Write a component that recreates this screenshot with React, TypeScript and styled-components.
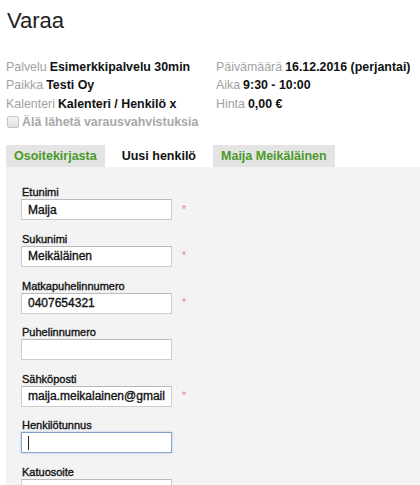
import styled, { createGlobalStyle } from "styled-components";

const GlobalStyle = createGlobalStyle`
    html, body {
        margin: 0;
        padding: 0;
        background: #fff;
    }
    body {
        font-family: "Liberation Sans", Arial, sans-serif;
        color: #111;
        overflow: hidden;
    }
`;

const Page = styled.main`
    padding: 8px 0 0 6px;
    width: 414px;
    height: 477px;
    overflow: hidden;
`;

const Title = styled.h1`
    margin: 0 0 0 1px;
    font-size: 22px;
    line-height: 26px;
    font-weight: 400;
    color: #222;
`;

const Info = styled.section`
    display: grid;
    grid-template-columns: 210px 1fr;
    grid-auto-rows: 18.3px;
    margin-top: 24px;
    font-size: 12.4px;
    line-height: 18.3px;
    white-space: nowrap;
`;

const InfoItem = styled.div`
    color: #111;
    font-weight: 700;
`;

const Key = styled.span`
    color: #a2a2a2;
    font-weight: 400;
    margin-right: 3px;
`;

const CheckRow = styled.label`
    grid-column: 1 / 3;
    display: flex;
    align-items: center;
    gap: 3px;
    color: #a8a8a8;
    font-size: 12.4px;
    font-weight: 700;
`;

const CheckBox = styled.span`
    box-sizing: border-box;
    width: 12px;
    height: 12px;
    margin-left: 1px;
    border: 1px solid #c4c4c4;
    border-radius: 2px;
    background: linear-gradient(#f4f4f4, #e2e2e2);
`;

const Tabs = styled.nav`
    display: flex;
    gap: 9px;
    margin-top: 14px;
`;

const Tab = styled.div<{ $active?: boolean }>`
    height: 22px;
    padding: 0 8px;
    line-height: 23px;
    font-size: 12.5px;
    font-weight: 700;
    color: ${(p) => (p.$active ? "#111" : "#4b9a2b")};
    background: ${(p) => (p.$active ? "#fff" : "#e4e4e4")};
`;

const Panel = styled.section`
    background: #f3f3f3;
    padding: 19px 0 0 15px;
    height: 320px;
`;

const Field = styled.div`
    margin-bottom: 12.67px;
`;

const Label = styled.label`
    display: block;
    margin-left: 1px;
    font-size: 11px;
    line-height: 13px;
    color: #111;
    -webkit-text-stroke: 0.35px #111;
`;

const InputRow = styled.div`
    position: relative;
    display: flex;
    align-items: center;
`;

const Input = styled.input<{ $focused?: boolean }>`
    box-sizing: border-box;
    width: 151px;
    height: 21px;
    padding: 0 6px;
    margin: 0;
    font-family: "Liberation Sans", Arial, sans-serif;
    font-size: 12px;
    color: #111;
    -webkit-text-stroke: 0.35px #111;
    background: #fff;
    border: 1px solid ${(p) => (p.$focused ? "#87a9d4" : "#cdcdcd")};
    border-top-color: ${(p) => (p.$focused ? "#7c9fcc" : "#b9b9b9")};
    box-shadow: ${(p) => (p.$focused ? "0 0 2px rgba(90, 140, 210, 0.5)" : "none")};
    outline: none;
`;

const Caret = styled.span`
    position: absolute;
    left: 7px;
    top: 4px;
    width: 1px;
    height: 14px;
    background: #222;
`;

const Star = styled.span`
    margin-left: 10px;
    color: #d9828a;
    font-size: 10px;
    line-height: 10px;
`;

type FieldData = { label: string; value: string; required?: boolean; focused?: boolean };

const fields: FieldData[] = [
    { label: "Etunimi", value: "Maija", required: true },
    { label: "Sukunimi", value: "Meikäläinen", required: true },
    { label: "Matkapuhelinnumero", value: "0407654321", required: true },
    { label: "Puhelinnumero", value: "" },
    { label: "Sähköposti", value: "maija.meikalainen@gmail.com", required: true },
    { label: "Henkilötunnus", value: "", focused: true },
    { label: "Katuosoite", value: "" },
];

const App = () => {
    return (
        <Page>
            <GlobalStyle />
            <Title>Varaa</Title>

            <Info>
                <InfoItem>
                    <Key>Palvelu</Key>Esimerkkipalvelu 30min
                </InfoItem>
                <InfoItem>
                    <Key>Päivämäärä</Key>16.12.2016 (perjantai)
                </InfoItem>
                <InfoItem>
                    <Key>Paikka</Key>Testi Oy
                </InfoItem>
                <InfoItem>
                    <Key>Aika</Key>9:30 - 10:00
                </InfoItem>
                <InfoItem>
                    <Key>Kalenteri</Key>Kalenteri / Henkilö x
                </InfoItem>
                <InfoItem>
                    <Key>Hinta</Key>0,00 €
                </InfoItem>
                <CheckRow>
                    <CheckBox />
                    Älä lähetä varausvahvistuksia
                </CheckRow>
            </Info>

            <Tabs>
                <Tab>Osoitekirjasta</Tab>
                <Tab $active>Uusi henkilö</Tab>
                <Tab>Maija Meikäläinen</Tab>
            </Tabs>

            <Panel>
                {fields.map((f) => (
                    <Field key={f.label}>
                        <Label>{f.label}</Label>
                        <InputRow>
                            <Input $focused={f.focused} defaultValue={f.value} readOnly />
                            {f.focused && <Caret />}
                            {f.required && <Star>*</Star>}
                        </InputRow>
                    </Field>
                ))}
            </Panel>
        </Page>
    );
};

export default App;
